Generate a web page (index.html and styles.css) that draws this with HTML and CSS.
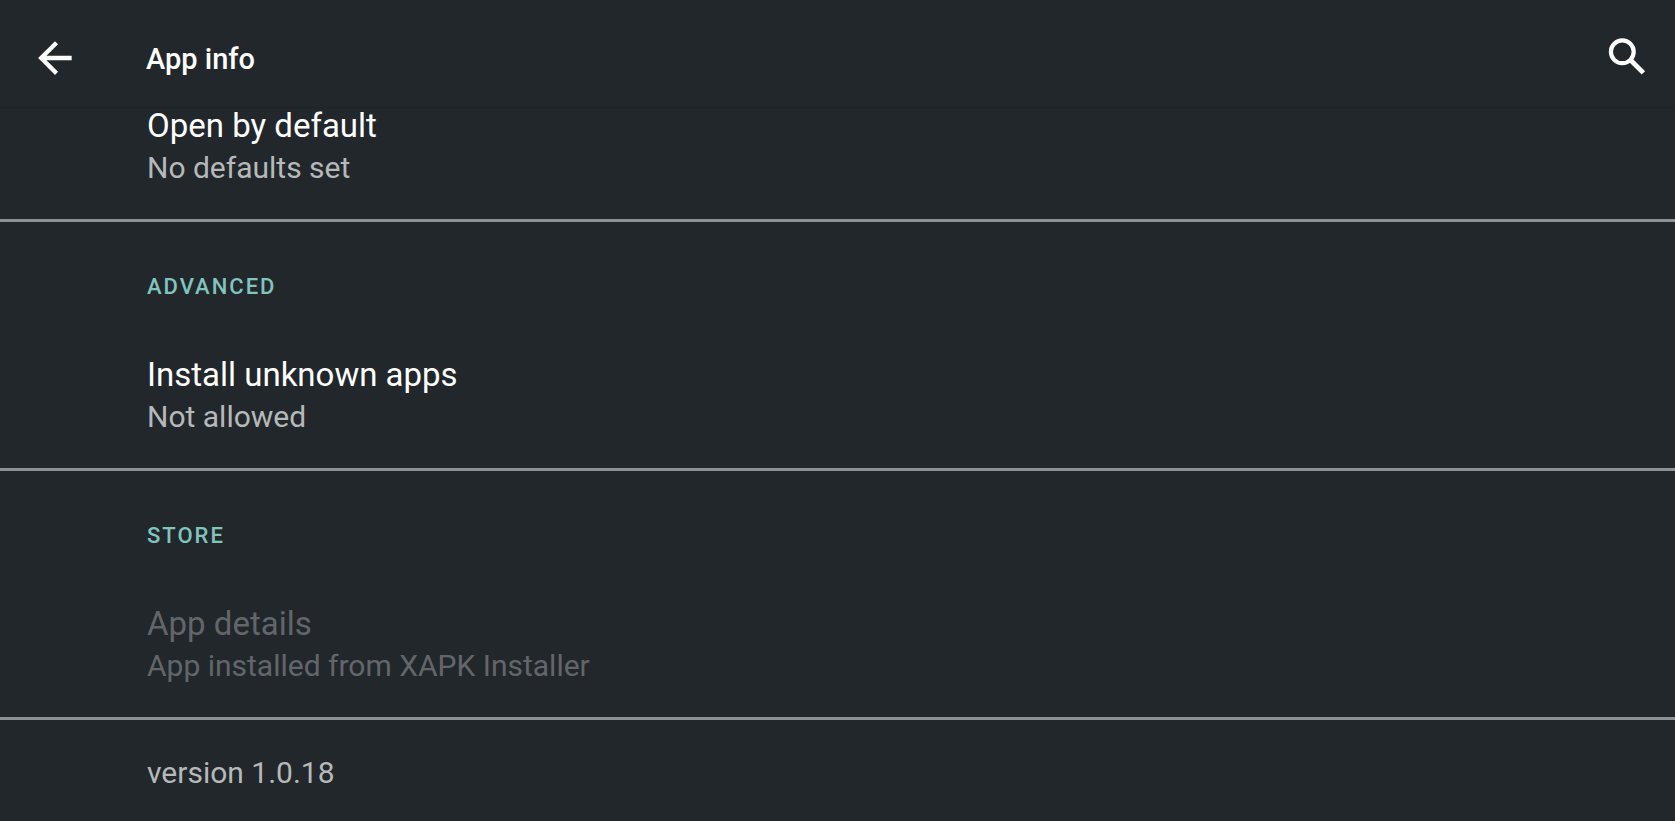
FILE: index.html
```html
<!DOCTYPE html>
<html lang="en">
<head>
  <meta charset="UTF-8" />
  <meta name="viewport" content="width=device-width, initial-scale=1.0" />
  <title>App info</title>
  <link rel="stylesheet" href="styles.css">
</head>
<body>
  <header class="toolbar">
    <button class="icon-button" aria-label="Back">
      <svg viewBox="0 0 24 24"><path d="M20 10.9H7.9l5.55-5.5L12 3.9l-8.1 8.1 8.1 8.1 1.45-1.5L7.9 13.1H20z" fill="currentColor"/></svg>
    </button>
    <h1>App info</h1>
    <button class="icon-button" aria-label="Search">
      <svg viewBox="0 0 50 50" fill="none" stroke="currentColor">
        <circle cx="19.3" cy="18.8" r="11.4" stroke-width="4.2"/>
        <path d="M27 26.5l13.4 13.4" stroke-width="4.8"/>
      </svg>
    </button>
  </header>

  <main class="settings">
    <section class="group">
      <button class="row">
        <span class="title">Open by default</span>
        <span class="summary">No defaults set</span>
      </button>
    </section>

    <section class="group">
      <h2>ADVANCED</h2>
      <button class="row">
        <span class="title">Install unknown apps</span>
        <span class="summary">Not allowed</span>
      </button>
    </section>

    <section class="group">
      <h2>STORE</h2>
      <button class="row" disabled>
        <span class="title">App details</span>
        <span class="summary">App installed from XAPK Installer</span>
      </button>
    </section>

    <p class="version">version 1.0.18</p>
  </main>
</body>
</html>
```
FILE: styles.css
```css
:root {
  --bg: #22272b;
  --text: #ffffff;
  --muted: #b6b9ba;
  --disabled: #62666a;
  --accent: #80c4be;
  --divider: #8c9294;
}
* {
  margin: 0;
  padding: 0;
  box-sizing: border-box;
}
body {
  font-family: Roboto, sans-serif;
  background-color: var(--bg);
  color: var(--text);
}
button {
  background: none;
  border: none;
  color: inherit;
  font: inherit;
  cursor: pointer;
}
.toolbar {
  display: flex;
  align-items: center;
  height: 108px;
  padding: 8px 22px 0 30px;
  border-bottom: 1px solid #1f2428;
}
.toolbar h1 {
  flex: 1;
  margin-left: 66px;
  padding-top: 2px;
  font-size: 29px;
  line-height: 40px;
  font-weight: 500;
}
.icon-button {
  width: 50px;
  height: 50px;
}
.icon-button svg {
  display: block;
  width: 50px;
  height: 50px;
}
/* list is scrolled a little way under the toolbar */
.settings {
  margin-top: -2px;
}
.group {
  border-bottom: 3px solid var(--divider);
}
.group h2 {
  padding: 49px 147px 0;
  font-size: 22px;
  line-height: 32px;
  font-weight: 500;
  letter-spacing: 2px;
  color: var(--accent);
}
.row {
  display: block;
  width: 100%;
  padding: 0 147px 31px;
  text-align: left;
}
.group h2 + .row {
  padding-top: 52px;
}
.title, .summary {
  display: block;
}
.title {
  font-size: 33px;
  line-height: 40px;
}
.summary {
  margin-top: 2px;
  font-size: 30px;
  line-height: 40px;
  color: var(--muted);
}
.row:disabled, .row:disabled .summary {
  color: var(--disabled);
  cursor: default;
}
.version {
  padding: 33px 147px 27px;
  font-size: 30px;
  line-height: 40px;
  color: var(--muted);
}
```
